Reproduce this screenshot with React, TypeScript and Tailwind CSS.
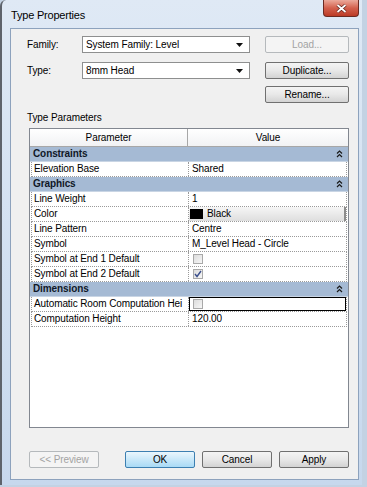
import React from 'react';

type Row =
    | { kind: 'group'; label: string }
    | { kind: 'data'; label: string; value?: string; cell?: 'color' | 'check' | 'checked' | 'boxcheck' };

const rows: Row[] = [
    { kind: 'group', label: 'Constraints' },
    { kind: 'data', label: 'Elevation Base', value: 'Shared' },
    { kind: 'group', label: 'Graphics' },
    { kind: 'data', label: 'Line Weight', value: '1' },
    { kind: 'data', label: 'Color', value: 'Black', cell: 'color' },
    { kind: 'data', label: 'Line Pattern', value: 'Centre' },
    { kind: 'data', label: 'Symbol', value: 'M_Level Head - Circle' },
    { kind: 'data', label: 'Symbol at End 1 Default', cell: 'check' },
    { kind: 'data', label: 'Symbol at End 2 Default', cell: 'checked' },
    { kind: 'group', label: 'Dimensions' },
    { kind: 'data', label: 'Automatic Room Computation Hei', cell: 'boxcheck' },
    { kind: 'data', label: 'Computation Height', value: '120.00' },
];

function CheckBox({ checked }: { checked?: boolean }) {
    return (
        <span className="w-[10px] h-[10px] border border-[#a9a9a9] bg-gradient-to-br from-[#dcdcdc] to-[#f7f7f7] flex items-center justify-center">
            {checked && (
                <svg width="8" height="8" viewBox="0 0 8 8">
                    <path d="M1 4 L3 6.5 L7 1" stroke="#3b4f8c" strokeWidth="1.4" fill="none" />
                </svg>
            )}
        </span>
    );
}

function Collapse() {
    return (
        <svg width="7" height="8" viewBox="0 0 7 8" className="mr-[5px]">
            <path d="M1 3.5 L3.5 1 L6 3.5" stroke="#1a1a1a" strokeWidth="1.2" fill="none" />
            <path d="M1 7 L3.5 4.5 L6 7" stroke="#1a1a1a" strokeWidth="1.2" fill="none" />
        </svg>
    );
}

function Select({ text }: { text: string }) {
    return (
        <div className="w-[168px] h-[17px] bg-white border border-[#8e8f8f] flex items-center justify-between pl-[3px] pr-[6px]">
            <span>{text}</span>
            <svg width="7" height="4" viewBox="0 0 7 4">
                <path d="M0 0 H7 L3.5 4 Z" fill="#111" />
            </svg>
        </div>
    );
}

function Btn({ children, w, variant }: { children: React.ReactNode; w: string; variant?: 'disabled' | 'default' }) {
    if (variant === 'disabled') {
        return (
            <div className={`${w} h-[17px] border border-[#b5b9bc] rounded-[2px] bg-[#f4f4f4] text-[#a3a3a3] flex items-center justify-center`}>
                {children}
            </div>
        );
    }
    if (variant === 'default') {
        return (
            <div className={`${w} h-[17px] border border-[#3c7fb1] rounded-[2px] bg-gradient-to-b from-[#eaf6fd] via-[#c9e8f9] to-[#a9daf5] flex items-center justify-center`}>
                {children}
            </div>
        );
    }
    return (
        <div className={`${w} h-[17px] border border-[#707070] rounded-[2px] bg-gradient-to-b from-[#f4f4f4] via-[#e8e8e8] to-[#d3d3d3] flex items-center justify-center`}>
            {children}
        </div>
    );
}

export default function App() {
    return (
        <div className="w-[367px] h-[487px] bg-[#c3d2e3] text-[10px] leading-[12px] tracking-[-0.1px] text-black font-['Liberation_Sans',Arial,sans-serif] overflow-hidden">
            <div className="w-[362px] h-[485px] flex flex-col bg-gradient-to-b from-[#dfe9f5] to-[#c7d8ed] border-l-2 border-[#5e636b] rounded-tl-[6px] pr-[3px] pb-[5px]">
                {/* title bar */}
                <div className="h-[28px] flex items-start justify-between shrink-0">
                    <span className="pl-[9px] pt-[9px] text-[11px] leading-[13px] tracking-[-0.2px]">Type Properties</span>
                    <div className="w-[36px] h-[17px] rounded-b-[4px] border border-t-0 border-[#6b2a22] bg-gradient-to-b from-[#eba99b] via-[#d3604d] to-[#bb3a25] flex items-center justify-center">
                        <svg width="11" height="9" viewBox="0 0 11 9">
                            <path d="M1.5 1 L9.5 8 M9.5 1 L1.5 8" stroke="#5a1e16" strokeWidth="3.2" />
                            <path d="M1.5 1 L9.5 8 M9.5 1 L1.5 8" stroke="#ffffff" strokeWidth="1.8" />
                        </svg>
                    </div>
                </div>

                {/* client */}
                <div className="flex-1 ml-[8px] border border-[#8da2bd] bg-[#f0f0f0] flex flex-col pl-[16px] pr-[9px] pt-[7px]">
                    <div className="flex items-center h-[17px]">
                        <span className="w-[55px]">Family:</span>
                        <Select text="System Family: Level" />
                        <div className="ml-auto">
                            <Btn w="w-[84px]" variant="disabled">Load...</Btn>
                        </div>
                    </div>
                    <div className="flex items-center h-[17px] mt-[9px]">
                        <span className="w-[55px]">Type:</span>
                        <Select text="8mm Head" />
                        <div className="ml-auto">
                            <Btn w="w-[84px]">Duplicate...</Btn>
                        </div>
                    </div>
                    <div className="flex justify-end mt-[7px]">
                        <Btn w="w-[84px]">Rename...</Btn>
                    </div>
                    <div className="mt-[9px] leading-[12px]">Type Parameters</div>

                    {/* table */}
                    <div className="mt-[4px] ml-[2px] w-[320px] h-[300px] border border-[#828790] bg-white flex flex-col">
                        <div className="h-[18px] flex border-b border-[#a7a7a7] bg-gradient-to-b from-white to-[#f1f2f4] shrink-0">
                            <div className="w-[158px] border-r border-[#a7a7a7] flex items-center justify-center">Parameter</div>
                            <div className="flex-1 flex items-center justify-center">Value</div>
                        </div>
                        {rows.map((r, i) =>
                            r.kind === 'group' ? (
                                <div key={i} className="h-[15px] shrink-0 flex items-center justify-between bg-[#a5bad4] pl-[3px] font-bold text-[#101828] border-b border-[#c9d5e4]">
                                    <span>{r.label}</span>
                                    <Collapse />
                                </div>
                            ) : (
                                <div key={i} className="h-[15px] shrink-0 flex border-b border-dotted border-[#9a9a9a] mx-[1px] border-x">
                                    <div className="w-[157px] pl-[2px] border-r border-dotted border-[#9a9a9a] flex items-center whitespace-nowrap overflow-hidden">
                                        {r.label}
                                    </div>
                                    {r.cell === 'color' ? (
                                        <div className="flex-1 flex items-center gap-[4px] pl-[1px] bg-gradient-to-b from-[#f6f6f6] to-[#dedede] border-r-2 border-[#8c8c8c]">
                                            <span className="w-[13px] h-[10px] bg-black" />
                                            <span>Black</span>
                                        </div>
                                    ) : r.cell === 'boxcheck' ? (
                                        <div className="flex-1 flex items-center pl-[3px] border border-black bg-white">
                                            <CheckBox />
                                        </div>
                                    ) : r.cell ? (
                                        <div className="flex-1 flex items-center pl-[4px]">
                                            <CheckBox checked={r.cell === 'checked'} />
                                        </div>
                                    ) : (
                                        <div className="flex-1 flex items-center pl-[3px]">{r.value}</div>
                                    )}
                                </div>
                            )
                        )}
                    </div>

                    {/* footer buttons */}
                    <div className="flex items-center mt-[23px] ml-[2px]">
                        <Btn w="w-[70px]" variant="disabled">&lt;&lt; Preview</Btn>
                        <div className="ml-[26px] flex gap-[7px]">
                            <Btn w="w-[70px]" variant="default">OK</Btn>
                            <Btn w="w-[70px]">Cancel</Btn>
                            <Btn w="w-[70px]">Apply</Btn>
                        </div>
                    </div>
                </div>
            </div>
        </div>
    );
}
